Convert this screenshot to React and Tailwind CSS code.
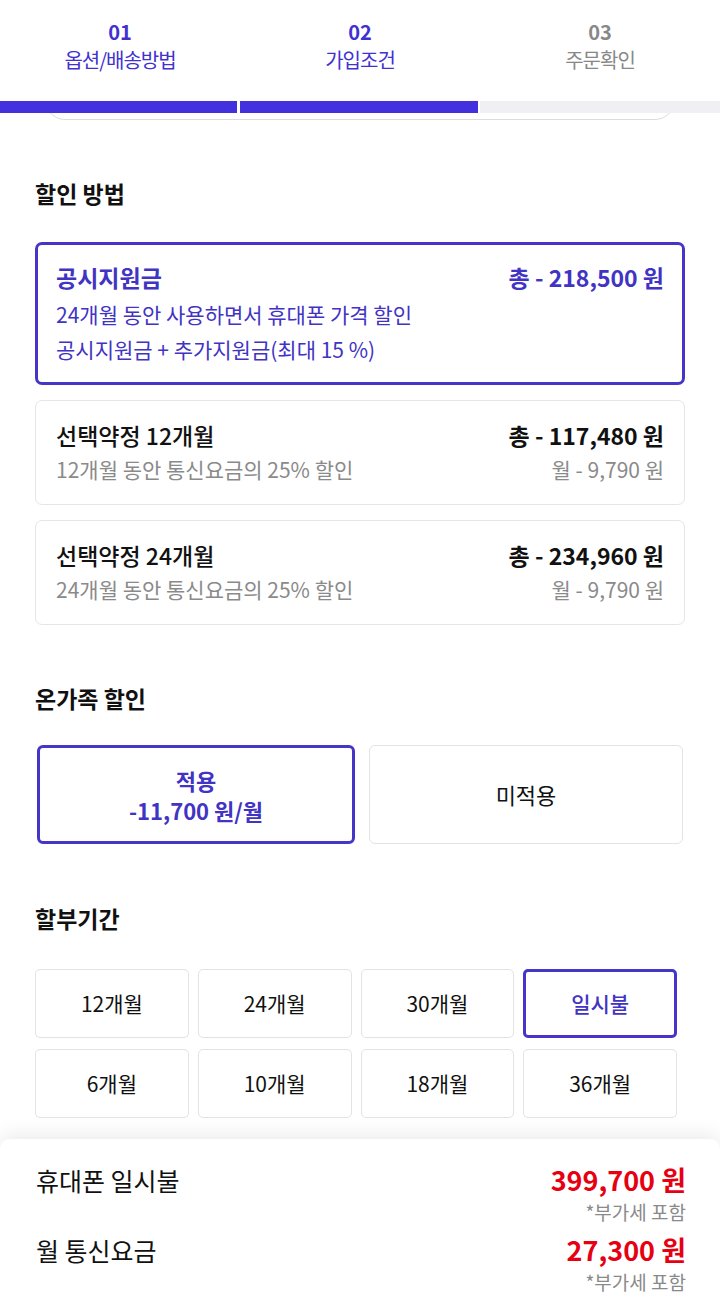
export default function App() {
  const F = "font-['Noto_Sans_CJK_KR','Noto_Sans',sans-serif]";
  const months1 = ["12개월", "24개월", "30개월", "일시불"];
  const months2 = ["6개월", "10개월", "18개월", "36개월"];
  return (
    <div className={`${F} w-[720px] bg-white text-[#111]`}>
      {/* header steps */}
      <div className="flex pt-[20px]">
        <div className="flex-1 flex flex-col items-center">
          <div className="text-[20px] leading-[24px] font-bold text-[#4131d0]">01</div>
          <div className="mt-[4px] text-[20px] leading-[24px] text-[#4131d0] tracking-[-1px]">옵션/배송방법</div>
        </div>
        <div className="flex-1 flex flex-col items-center">
          <div className="text-[20px] leading-[24px] font-bold text-[#4131d0]">02</div>
          <div className="mt-[4px] text-[20px] leading-[24px] text-[#4131d0] tracking-[-1px]">가입조건</div>
        </div>
        <div className="flex-1 flex flex-col items-center">
          <div className="text-[20px] leading-[24px] font-bold text-[#888]">03</div>
          <div className="mt-[4px] text-[20px] leading-[24px] text-[#888] tracking-[-1px]">주문확인</div>
        </div>
      </div>
      <div className="mt-[29px] flex h-[12px]">
        <div className="w-[237px] bg-[#4231dc]" />
        <div className="ml-[3px] w-[238px] bg-[#4231dc]" />
        <div className="ml-[2px] flex-1 bg-[#f0f0f4]" />
      </div>
      <div className="mx-[45px] h-[7px] overflow-hidden flex flex-col justify-end">
        <div className="shrink-0 h-[40px] rounded-[22px] border border-[#dcdcdc]" />
      </div>

      {/* 할인 방법 */}
      <div className="px-[35px]">
        <div className="mt-[58px] text-[23px] leading-[30px] font-bold">할인 방법</div>
        <div className="mt-[34px] rounded-[7px] border-[3px] border-[#4536c8] px-[18px] pt-[17px] pb-[15px] text-[#4133c4]">
          <div className="flex justify-between text-[23px] leading-[30px] font-bold">
            <span>공시지원금</span>
            <span>총 - 218,500 원</span>
          </div>
          <div className="mt-[5px] text-[21px] leading-[35px]">24개월 동안 사용하면서 휴대폰 가격 할인</div>
          <div className="text-[21px] leading-[35px]">공시지원금 + 추가지원금(최대 15 %)</div>
        </div>
        {[
          ["선택약정 12개월", "12개월 동안 통신요금의 25% 할인", "총 - 117,480 원"],
          ["선택약정 24개월", "24개월 동안 통신요금의 25% 할인", "총 - 234,960 원"],
        ].map(([t, s, p]) => (
          <div key={t} className="mt-[15px] rounded-[7px] border border-[#e6e6e6] px-[20px] pt-[19px] pb-[20px]">
            <div className="flex justify-between text-[23px] leading-[30px]">
              <span className="font-medium">{t}</span>
              <span className="font-bold">{p}</span>
            </div>
            <div className="mt-[4px] flex justify-between text-[21px] leading-[30px] text-[#8a8a8a]">
              <span>{s}</span>
              <span>월 - 9,790 원</span>
            </div>
          </div>
        ))}

        {/* 온가족 할인 */}
        <div className="mt-[58px] text-[23px] leading-[30px] font-bold">온가족 할인</div>
        <div className="mt-[32px] flex gap-[14px] px-[2px]">
          <div className="flex-1 h-[99px] rounded-[6px] border-[3px] border-[#4536c8] flex flex-col items-center justify-center text-[#4133c4] font-bold text-[22px] leading-[30px]">
            <span>적용</span>
            <span>-11,700 원/월</span>
          </div>
          <div className="flex-1 h-[99px] rounded-[6px] border border-[#e3e3e3] flex items-center justify-center text-[22px]">
            미적용
          </div>
        </div>

        {/* 할부기간 */}
        <div className="mt-[59px] text-[23px] leading-[30px] font-bold">할부기간</div>
        <div className="mt-[36px] w-[642px] grid grid-cols-4 gap-x-[9px] gap-y-[11px]">
          {months1.map((m) =>
            m === "일시불" ? (
              <div key={m} className="h-[69px] rounded-[5px] border-[3px] border-[#4536c8] flex items-center justify-center text-[21px] font-medium text-[#4133c4]">
                {m}
              </div>
            ) : (
              <div key={m} className="h-[69px] rounded-[5px] border border-[#e3e3e3] flex items-center justify-center text-[21px]">
                {m}
              </div>
            )
          )}
          {months2.map((m) => (
            <div key={m} className="h-[69px] rounded-[5px] border border-[#e3e3e3] flex items-center justify-center text-[21px]">
              {m}
            </div>
          ))}
        </div>
      </div>

      {/* bottom sheet */}
      <div className="mt-[21px] h-[170px] rounded-t-[10px] bg-white shadow-[0_-6px_18px_rgba(0,0,0,0.07)] pl-[36px] pr-[34px] pt-[25px]">
        <div className="flex justify-between items-start">
          <span className="text-[25px] leading-[32px]">휴대폰 일시불</span>
          <div className="flex flex-col items-end">
            <span className="text-[27px] leading-[32px] font-bold text-[#e60012]">399,700 원</span>
            <span className="mt-[4px] text-[19px] leading-[24px] text-[#8a8a8a]">*부가세 포함</span>
          </div>
        </div>
        <div className="mt-[10px] flex justify-between items-start">
          <span className="text-[25px] leading-[32px]">월 통신요금</span>
          <div className="flex flex-col items-end">
            <span className="text-[27px] leading-[32px] font-bold text-[#e60012]">27,300 원</span>
            <span className="mt-[4px] text-[19px] leading-[24px] text-[#8a8a8a]">*부가세 포함</span>
          </div>
        </div>
      </div>
    </div>
  );
}
